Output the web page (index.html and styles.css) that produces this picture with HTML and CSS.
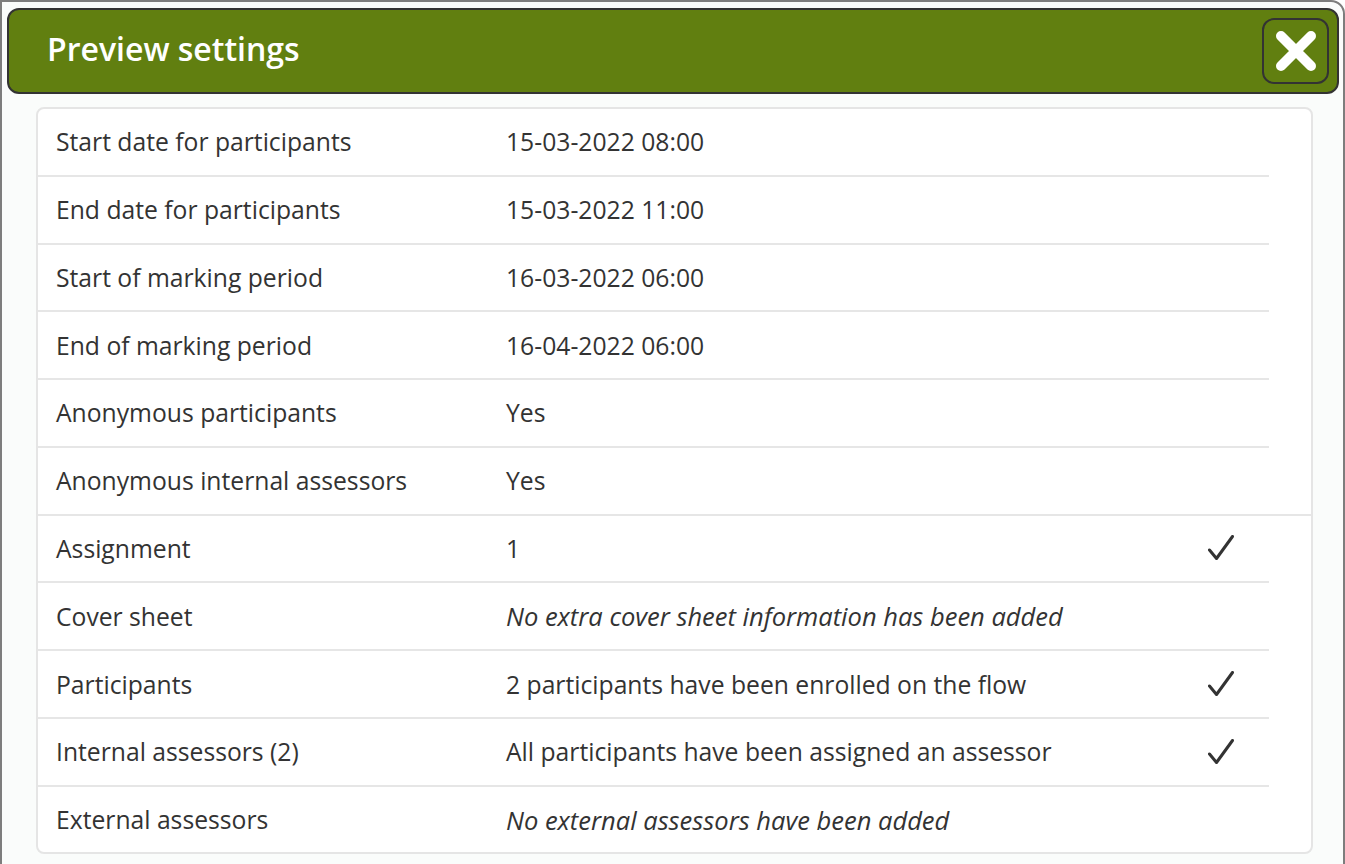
FILE: index.html
```html
<!DOCTYPE html>
<html lang="en">
<head>
<meta charset="utf-8">
<title>Preview settings</title>
<link rel="stylesheet" href="styles.css">
</head>
<body>
<div class="dialog">
  <header class="dialog-header">
    <h1 class="dialog-title">Preview settings</h1>
    <button class="close-btn" aria-label="Close">
      <svg width="42" height="42" viewBox="0 0 42 42"><path d="M6 6 L36 36 M36 6 L6 36" stroke="#fff" stroke-width="10" stroke-linecap="round" fill="none"/></svg>
    </button>
  </header>
  <div class="card">
    <div class="group">
      <div class="row"><div class="label">Start date for participants</div><div class="value">15-03-2022 08:00</div><div class="check"></div></div>
      <div class="row"><div class="label">End date for participants</div><div class="value">15-03-2022 11:00</div><div class="check"></div></div>
      <div class="row"><div class="label">Start of marking period</div><div class="value">16-03-2022 06:00</div><div class="check"></div></div>
      <div class="row"><div class="label">End of marking period</div><div class="value">16-04-2022 06:00</div><div class="check"></div></div>
      <div class="row"><div class="label">Anonymous participants</div><div class="value">Yes</div><div class="check"></div></div>
      <div class="row"><div class="label">Anonymous internal assessors</div><div class="value">Yes</div><div class="check"></div></div>
    </div>
    <div class="group group-second">
      <div class="row"><div class="label">Assignment</div><div class="value">1</div><div class="check"><svg class="tick" width="26" height="26" viewBox="0 0 26 26"><path d="M1.5 15 L8.5 23.5 L24.5 1.5" stroke="#333" stroke-width="3" stroke-linecap="round" stroke-linejoin="round" fill="none"/></svg></div></div>
      <div class="row"><div class="label">Cover sheet</div><div class="value italic">No extra cover sheet information has been added</div><div class="check"></div></div>
      <div class="row"><div class="label">Participants</div><div class="value">2 participants have been enrolled on the flow</div><div class="check"><svg class="tick" width="26" height="26" viewBox="0 0 26 26"><path d="M1.5 15 L8.5 23.5 L24.5 1.5" stroke="#333" stroke-width="3" stroke-linecap="round" stroke-linejoin="round" fill="none"/></svg></div></div>
      <div class="row"><div class="label">Internal assessors (2)</div><div class="value">All participants have been assigned an assessor</div><div class="check"><svg class="tick" width="26" height="26" viewBox="0 0 26 26"><path d="M1.5 15 L8.5 23.5 L24.5 1.5" stroke="#333" stroke-width="3" stroke-linecap="round" stroke-linejoin="round" fill="none"/></svg></div></div>
      <div class="row"><div class="label">External assessors</div><div class="value italic">No external assessors have been added</div><div class="check"></div></div>
    </div>
  </div>
</div>
</body>
</html>
```

FILE: styles.css
```css
html, body {
  margin: 0;
  padding: 0;
  background: #ffffff;
  overflow: hidden;
}

body {
  font-family: "Open Sans", "Liberation Sans", sans-serif;
  color: #333333;
}

.dialog {
  box-sizing: border-box;
  width: 1345px;
  min-height: 900px;
  border: 2px solid #7d7d7d;
  border-radius: 0 14px 0 0;
  background: #fafcfb;
  padding: 6px 4px 0 5px;
}

.dialog-header {
  box-sizing: border-box;
  height: 86px;
  background: #617f10;
  border: 2px solid #333333;
  border-radius: 12px;
  display: flex;
  align-items: center;
  justify-content: space-between;
  padding: 0 8px 0 38px;
}

.dialog-title {
  margin: 0 0 4px 0;
  color: #ffffff;
  font-size: 32px;
  font-weight: 600;
  line-height: 1;
}

.close-btn {
  box-sizing: border-box;
  width: 67px;
  height: 66px;
  background: #617f10;
  border: 2px solid #333333;
  border-radius: 12px;
  padding: 0;
  display: flex;
  align-items: center;
  justify-content: center;
}

.card {
  margin: 13px 26px 0 29px;
  background: #ffffff;
  border: 2px solid #e5e5e5;
  border-radius: 8px;
}

.group-second {
  border-top: 2px solid #e6e6e6;
}

.row {
  display: grid;
  grid-template-columns: 450px 1fr 61px;
  align-items: center;
  height: 65.78px;
  margin-right: 42px;
  padding-left: 18px;
  border-bottom: 2px solid #e6e6e6;
  font-size: 24.7px;
}

.group .row:last-child {
  border-bottom: none;
}

.italic {
  font-style: italic;
  font-size: 25.5px;
}

.check {
  display: flex;
  align-items: center;
}

.tick {
  display: block;
}
```
